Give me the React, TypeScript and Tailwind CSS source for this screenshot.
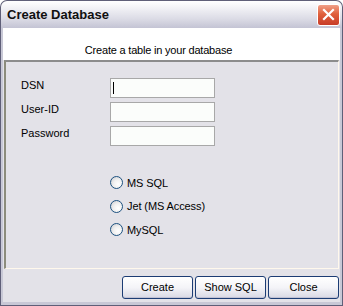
import React from "react";

const font = { fontFamily: '"Liberation Sans", Arial, sans-serif' };

const XpButton = ({ label }: { label: string }) => (
    <button className="h-[23px] w-[71px] rounded-[3px] border border-[#1c3c74] bg-[linear-gradient(to_bottom,#ffffff_0%,#f4f4f8_50%,#d8d8e4_100%)] text-[11px] text-black shadow-[inset_0_-1px_0_#c2c2d4]">
        {label}
    </button>
);

const Radio = ({ label }: { label: string }) => (
    <label className="flex h-[23.5px] items-center gap-[4px]">
        <span className="h-[13px] w-[13px] rounded-full border border-[#1c5180] bg-[radial-gradient(circle_at_65%_65%,#ffffff_0%,#f0f0f0_45%,#c8c8cc_100%)]" />
        <span className="text-[11px] tracking-[-0.1px] text-black">{label}</span>
    </label>
);

export default function App() {
    return (
        <div
            className="flex h-[306px] w-[343px] flex-col overflow-hidden rounded-t-[7px] bg-[#5f5f78]"
            style={font}
        >
            {/* Title bar */}
            <div className="mx-[1px] mt-[1px] flex h-[27px] items-center justify-between rounded-t-[6px] bg-[linear-gradient(to_bottom,#ffffff_0%,#f2f2f6_25%,#dcdce6_65%,#c4c4d4_100%)] pl-[6px] pr-[2px]">
                <span className="text-[13px] font-bold text-[#101010]">Create Database</span>
                <div className="flex h-[22px] w-[23px] items-center justify-center rounded-[3px] border border-white bg-[linear-gradient(to_bottom,#f0a088_0%,#e0603c_45%,#c83c28_100%)]">
                    <svg width="13" height="13" viewBox="0 0 13 13">
                        <path d="M2 2 L11 11 M11 2 L2 11" stroke="#ffffff" strokeWidth="2.2" strokeLinecap="square" />
                    </svg>
                </div>
            </div>

            {/* Frame */}
            <div className="mx-[1px] mb-[1px] flex flex-1 flex-col bg-[#c8c8d6] px-[2px] pb-[3px]">
                <div className="flex flex-1 flex-col bg-[#e3e2e8]">
                    {/* Header */}
                    <div className="h-[32px] bg-white">
                        <div className="w-[311px] pt-[14px] text-center text-[11px] tracking-[-0.2px] text-black">
                            Create a table in your database
                        </div>
                    </div>

                    {/* Panel */}
                    <div className="ml-[1px] mr-[1px] flex h-[209px] flex-col border-b border-l-2 border-r border-t-2 border-b-[#fff8ec] border-l-[#8c8c7c] border-r-[#fff8ec] border-t-[#8c8c8c] pl-[15px] pt-[16px]">
                        <div className="grid grid-cols-[89px_105px] gap-y-[4px]">
                            <span className="text-[11px] leading-[14px] text-black">DSN</span>
                            <div className="flex h-[20px] items-center border border-[#a8a8a8] bg-[#fbfdfb] pl-[2px]">
                                <span className="h-[12px] w-[1px] bg-black" />
                            </div>
                            <span className="text-[11px] leading-[14px] text-black">User-ID</span>
                            <div className="h-[20px] border border-[#a8a8a8] bg-[#fbfdfb]" />
                            <span className="text-[11px] leading-[14px] text-black">Password</span>
                            <div className="h-[20px] border border-[#a8a8a8] bg-[#fbfdfb]" />
                        </div>
                        <div className="ml-[89px] mt-[25px] flex flex-col">
                            <Radio label="MS SQL" />
                            <Radio label="Jet (MS Access)" />
                            <Radio label="MySQL" />
                        </div>
                    </div>

                    {/* Footer */}
                    <div className="flex flex-1 items-start justify-end gap-[2px] pr-[1px] pt-[7px]">
                        <XpButton label="Create" />
                        <XpButton label="Show SQL" />
                        <XpButton label="Close" />
                    </div>
                </div>
            </div>
        </div>
    );
}
